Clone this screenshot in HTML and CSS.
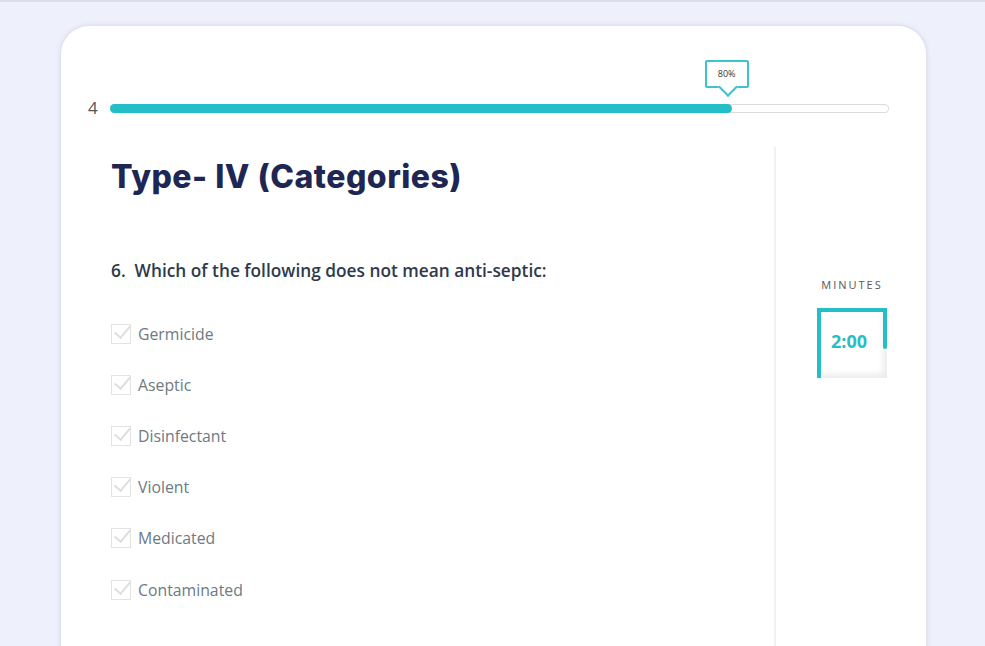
FILE: index.html
```html
<!DOCTYPE html>
<html lang="en">

<head>
    <meta charset="UTF-8">
    <meta name="viewport" content="width=device-width, initial-scale=1.0">
    <title>Quiz</title>
    <link rel="stylesheet" href="styles.css">
</head>

<body>
    <div class="card">
        <div class="progress_row">
            <div class="step">4</div>
            <div class="track">
                <div class="fill" style="width: 79.8%;">
                    <div class="tip">80%</div>
                </div>
            </div>
        </div>
        <div class="main">
            <section class="quiz">
                <h1 class="title">Type- IV (Categories)</h1>
                <p class="question">6.&nbsp; Which of the following does not mean anti-septic:</p>
                <ul class="options">
                    <li><span class="box"></span>Germicide</li>
                    <li><span class="box"></span>Aseptic</li>
                    <li><span class="box"></span>Disinfectant</li>
                    <li><span class="box"></span>Violent</li>
                    <li><span class="box"></span>Medicated</li>
                    <li><span class="box"></span>Contaminated</li>
                </ul>
            </section>
            <aside class="side">
                <div class="label">MINUTES</div>
                <div class="timer">2:00</div>
            </aside>
        </div>
    </div>
</body>

</html>
```

FILE: styles.css
```css
* {
    margin: 0;
    padding: 0;
    box-sizing: border-box;
}

ul,
li {
    list-style: none;
}

body {
    background-color: #eef0fc;
    border-top: 2px solid #dcdde9;
    font-family: "Open Sans", "Liberation Sans", sans-serif;
    height: 646px;
    overflow: hidden;
}

.card {
    margin: 24px 0 0 61px;
    width: 865px;
    height: 660px;
    background-color: #fff;
    border-radius: 28px 28px 0 0;
    box-shadow: 0 0 5px rgba(150, 150, 190, 0.35);
}

.progress_row {
    display: flex;
    align-items: center;
    padding: 74px 37px 0 27px;
}

.step {
    width: 22px;
    font-size: 17px;
    line-height: 16px;
    color: #555;
}

.track {
    flex: 1;
    height: 9px;
    border-radius: 5px;
    background-color: #fff;
    box-shadow: inset 0 0 0 1px #dcdcdc;
    position: relative;
}

.fill {
    height: 100%;
    border-radius: 5px;
    background-color: #24bec8;
    position: relative;
}

.tip {
    position: absolute;
    right: -17px;
    bottom: 25px;
    width: 44px;
    height: 28px;
    border: 2px solid #3cc3cb;
    border-radius: 2px;
    background-color: #fff;
    font-size: 9px;
    line-height: 24px;
    text-align: center;
    color: #333;
}

.tip::after {
    content: "";
    position: absolute;
    left: 14px;
    bottom: -8px;
    width: 12px;
    height: 12px;
    background-color: #fff;
    border-right: 2px solid #3cc3cb;
    border-bottom: 2px solid #3cc3cb;
    transform: rotate(45deg);
}

.main {
    display: flex;
    margin-top: 31px;
    height: 520px;
}

.quiz {
    width: 714px;
    padding-left: 50px;
}

.title {
    margin-top: 10px;
    font-family: Inter, "Noto Sans", sans-serif;
    font-weight: 800;
    font-size: 32px;
    letter-spacing: 0.5px;
    line-height: 40px;
    color: #1e2753;
}

.question {
    margin-top: 62px;
    font-weight: 600;
    font-size: 17.3px;
    line-height: 24px;
    color: #2e3a4a;
}

.options {
    margin-top: 25px;
}

.options li {
    display: flex;
    align-items: center;
    height: 51.2px;
    font-size: 15.8px;
    color: #6d7a84;
}

.box {
    width: 20px;
    height: 20px;
    margin-right: 7px;
    border: 1px solid #e3e3e3;
    position: relative;
}

.box::after {
    content: "";
    position: absolute;
    left: 6px;
    top: -3px;
    width: 7px;
    height: 14px;
    border-right: 2px solid #dedede;
    border-bottom: 2px solid #dedede;
    transform: rotate(40deg);
}

.side {
    flex: 1;
    border-left: 2px solid #f1f1f1;
    margin-left: -1px;
    display: flex;
    flex-direction: column;
    align-items: center;
    padding-top: 130px;
}

.label {
    font-size: 11px;
    letter-spacing: 2px;
    color: #555;
    margin-left: 2px;
}

.timer {
    margin-top: 16px;
    margin-left: 2px;
    width: 70px;
    height: 70px;
    border-left: 4px solid #24bec8;
    border-top: 4px solid #24bec8;
    box-shadow: inset -4px -4px 6px rgba(0, 0, 0, 0.08);
    padding-right: 10px;
    font-weight: 700;
    font-size: 18px;
    line-height: 58px;
    text-align: center;
    color: #2bbcc6;
    position: relative;
}

.timer::after {
    content: "";
    position: absolute;
    right: 0;
    top: -4px;
    width: 4px;
    height: 41px;
    border-radius: 0 0 2px 2px;
    background-color: #24bec8;
}
```
